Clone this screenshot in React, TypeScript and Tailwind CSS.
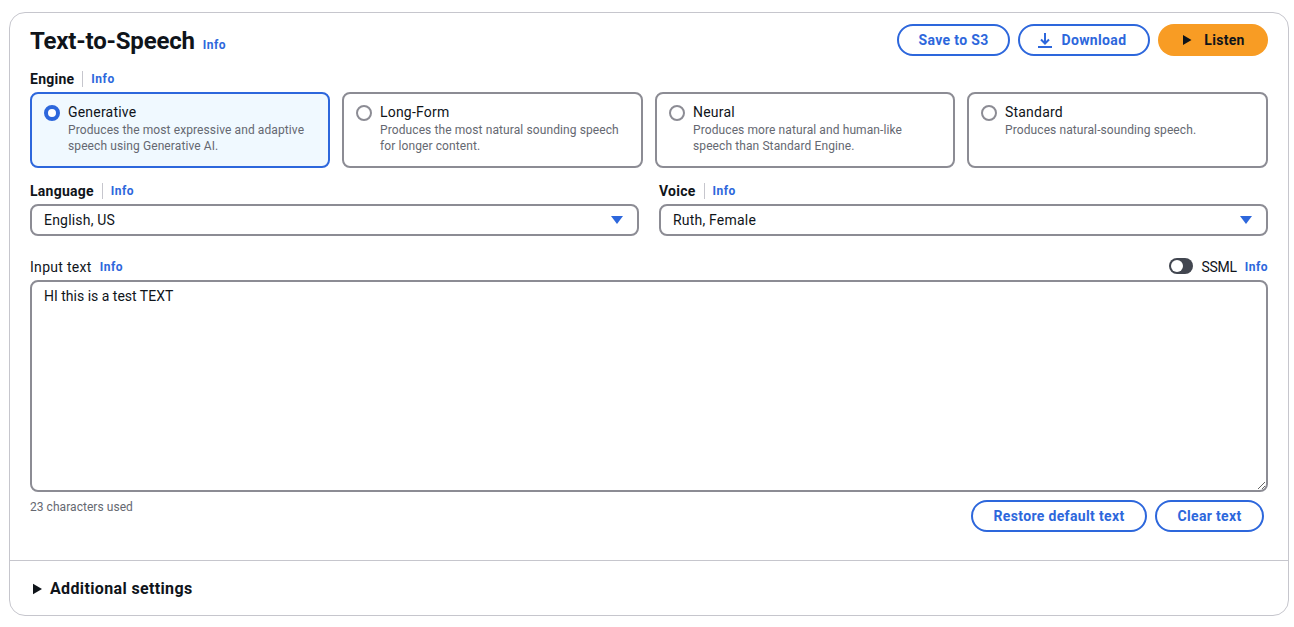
import React from "react";

const font = "font-['Roboto','Noto_Sans',sans-serif]";

function Info({ className = "" }: { className?: string }) {
  return <span className={`text-[12px] leading-4 font-bold tracking-[0.5px] text-[#2d67dc] ${className}`}>Info</span>;
}

function Pill({ children, className = "" }: { children: React.ReactNode; className?: string }) {
  return (
    <div className={`h-8 flex items-center justify-center rounded-full border-2 border-[#2d67dc] bg-white text-[14px] font-bold tracking-[0.35px] text-[#2d67dc] ${className}`}>
      {children}
    </div>
  );
}

function Card({ title, desc, selected }: { title: string; desc: React.ReactNode; selected?: boolean }) {
  return (
    <div className={`h-[76px] rounded-lg border-2 pl-[12px] pt-[10px] flex gap-2 ${selected ? "border-[#2d67dc] bg-[#f0f9ff]" : "border-[#8c8c94] bg-white"}`}>
      {selected ? (
        <div className="mt-[1px] w-4 h-4 rounded-full border-[4.5px] border-[#2d67dc] bg-white shrink-0" />
      ) : (
        <div className="mt-[1px] w-4 h-4 rounded-full border-2 border-[#8c8c94] bg-white shrink-0" />
      )}
      <div>
        <div className="text-[14px] leading-4 mb-[2px] tracking-[0.2px] text-[#0f141a]">{title}</div>
        <div className="text-[12px] leading-4 tracking-[0.1px] text-[#656871]">{desc}</div>
      </div>
    </div>
  );
}

function Label({ text }: { text: string }) {
  return (
    <div className="flex items-center h-4">
      <span className="text-[14px] leading-4 font-bold tracking-[0.25px] text-[#0f141a]">{text}</span>
      <span className="w-px h-4 bg-[#c6c6cd] ml-2 mr-2" />
      <Info />
    </div>
  );
}

function Select({ value }: { value: string }) {
  return (
    <div className="h-[32px] mt-[5px] rounded-lg border-2 border-[#8c8c94] bg-white pl-3 pr-[14px] flex items-center justify-between">
      <span className="text-[14px] tracking-[0.2px] text-[#0f141a]">{value}</span>
      <svg width="12" height="8" viewBox="0 0 12 8"><path d="M0 0h12L6 8z" fill="#2d67dc" /></svg>
    </div>
  );
}

export default function App() {
  return (
    <div className={`${font} bg-white h-[627px] pt-3 pl-[9px] pr-[5px]`}>
      <div className="h-[604px] rounded-2xl border border-[#c6c6cd] flex flex-col">
        <div className="px-5 pt-[11px]">
          <div className="flex justify-between items-start h-8">
            <div className="flex items-center h-8 gap-2">
              <span className="text-[24px] leading-8 mt-[2px] font-bold tracking-[-0.2px] text-[#0f141a]">Text-to-Speech</span>
              <Info className="mt-[10px]" />
            </div>
            <div className="flex gap-2">
              <Pill className="w-[113px]">Save to S3</Pill>
              <Pill className="w-[132px] gap-[9px] pr-[5px]">
                <svg width="16" height="16" viewBox="0 0 16 16" fill="none" stroke="#2d67dc" strokeWidth="2"><path d="M1 15h14M8 1v10M4 7.5l4 4 4-4" /></svg>
                Download
              </Pill>
              <div className="w-[110px] h-8 rounded-full bg-[#f89c24] flex items-center justify-center gap-[11px] text-[14px] font-bold tracking-[0.3px] text-[#0f141a]">
                <svg width="12" height="12" viewBox="0 0 12 12"><path d="M2 1l8.5 5-8.5 5z" fill="#0f141a" /></svg>
                Listen
              </div>
            </div>
          </div>

          <div className="mt-[15px]"><Label text="Engine" /></div>
          <div className="grid grid-cols-[300px_301px_300px_301px] gap-3 mt-[5px]">
            <Card selected title="Generative" desc={<>Produces the most expressive and adaptive<br />speech using Generative AI.</>} />
            <Card title="Long-Form" desc={<>Produces the most natural sounding speech<br />for longer content.</>} />
            <Card title="Neural" desc={<>Produces more natural and human-like<br />speech than Standard Engine.</>} />
            <Card title="Standard" desc="Produces natural-sounding speech." />
          </div>

          <div className="grid grid-cols-2 gap-5 mt-[15px]">
            <div><Label text="Language" /><Select value="English, US" /></div>
            <div><Label text="Voice" /><Select value="Ruth, Female" /></div>
          </div>

          <div className="flex justify-between items-center h-4 mt-[22px]">
            <div className="flex items-center gap-2">
              <span className="text-[14px] leading-4 mt-[1px] tracking-[0.3px] text-[#0f141a]">Input text</span>
              <Info className="mt-[1px]" />
            </div>
            <div className="flex items-center">
              <div className="w-6 h-4 rounded-full bg-[#424650] flex items-center pl-[2px] mr-2">
                <div className="w-3 h-3 rounded-full bg-white" />
              </div>
              <span className="text-[14px] leading-4 mt-[1px] tracking-[-0.3px] text-[#0f141a] mr-2">SSML</span>
              <Info className="mt-[1px]" />
            </div>
          </div>

          <textarea
            readOnly
            defaultValue="HI this is a test TEXT"
            className="block w-full h-[212px] mt-[6px] rounded-lg border-2 border-[#8c8c94] bg-white px-3 py-1 text-[14px] leading-[21px] text-[#0f141a] outline-none"
          />

          <div className="flex justify-between items-start mt-2">
            <span className="text-[12px] leading-4 mt-[-1px] tracking-[0.05px] text-[#656871]">23 characters used</span>
            <div className="flex gap-2 pr-1">
              <Pill className="w-[176px]">Restore default text</Pill>
              <Pill className="w-[109px]">Clear text</Pill>
            </div>
          </div>
        </div>

        <div className="mt-[28px] border-t border-[#c6c6cd] flex-1 px-5 pt-[2px] flex items-center gap-2">
          <svg width="12" height="12" viewBox="0 0 12 12"><path d="M3 0.8l9 5.2-9 5.2z" fill="#0f141a" /></svg>
          <span className="text-[16px] leading-5 font-bold tracking-[0.36px] text-[#0f141a]">Additional settings</span>
        </div>
      </div>
    </div>
  );
}
